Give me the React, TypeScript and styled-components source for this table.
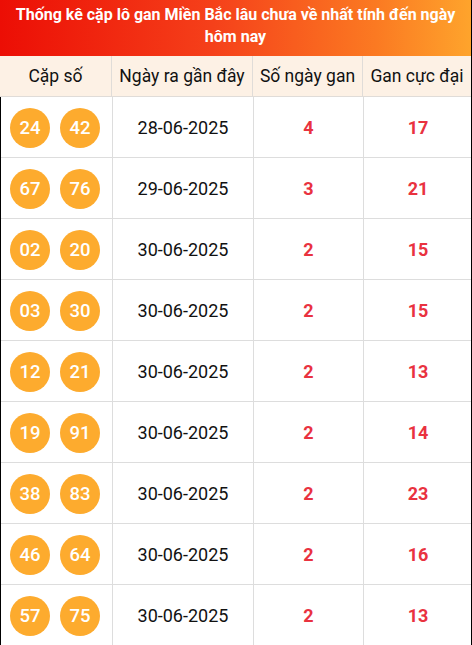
import React from 'react'
import { styled, createGlobalStyle } from 'styled-components';

const GlobalStyle = createGlobalStyle`
	body {
		margin: 0;
		font-family: Roboto, "Liberation Sans", sans-serif;
		background: #fff;
	}
`

interface RowData {
	pair: [string, string];
	date: string;
	days: number;
	max: number;
}

const rows: RowData[] = [
	{ pair: ['24', '42'], date: '28-06-2025', days: 4, max: 17 },
	{ pair: ['67', '76'], date: '29-06-2025', days: 3, max: 21 },
	{ pair: ['02', '20'], date: '30-06-2025', days: 2, max: 15 },
	{ pair: ['03', '30'], date: '30-06-2025', days: 2, max: 15 },
	{ pair: ['12', '21'], date: '30-06-2025', days: 2, max: 13 },
	{ pair: ['19', '91'], date: '30-06-2025', days: 2, max: 14 },
	{ pair: ['38', '83'], date: '30-06-2025', days: 2, max: 23 },
	{ pair: ['46', '64'], date: '30-06-2025', days: 2, max: 16 },
	{ pair: ['57', '75'], date: '30-06-2025', days: 2, max: 13 },
];

const Wrapper = styled.div`
	width: 472px;
	height: 645px;
	overflow: hidden;
	box-sizing: border-box;
	border-right: 1px solid #000;
`
const Title = styled.div`
	height: 56px;
	box-sizing: border-box;
	padding: 4px 8px 0;
	background: linear-gradient(90deg, #ec0e05 0%, #f5401a 45%, #fb7a22 80%, #fea42c 100%);
	color: #fff;
	font-weight: 700;
	font-size: 16px;
	line-height: 22px;
	text-align: center;
`
const Grid = styled.div`
	display: grid;
	grid-template-columns: 112px 141px 110px 108px;
`
const HeadCell = styled.div`
	height: 41px;
	box-sizing: border-box;
	background: #fdf1e5;
	border-right: 1px solid #e0dcd8;
	border-bottom: 1px solid #e0dcd8;
	display: flex;
	align-items: center;
	justify-content: center;
	font-size: 17.5px;
	color: #111;
	white-space: nowrap;
	&:last-child {
		border-right: none;
	}
`
const Body = styled.div`
	border-left: 1px solid #000;
	border-bottom: 1px solid #000;
`
const Cell = styled.div<{ $last?: boolean }>`
	height: 61px;
	box-sizing: border-box;
	border-right: ${({ $last }) => ($last ? 'none' : '1px solid #ddd')};
	border-bottom: 1px solid #ddd;
	display: flex;
	align-items: center;
	justify-content: center;
	padding-top: 1px;
`
const Balls = styled(Cell)`
	justify-content: flex-start;
	gap: 10px;
	padding-left: 9px;
`
const Ball = styled.span`
	width: 40px;
	height: 40px;
	border-radius: 50%;
	background: #fdab2e;
	color: #fff;
	font-size: 18.5px;
	font-weight: 500;
	display: flex;
	align-items: center;
	justify-content: center;
`
const DateText = styled.span`
	font-size: 18px;
	color: #111;
`
const RedNum = styled.span`
	font-size: 18px;
	font-weight: 700;
	color: #e9323f;
`

const App = () => {
	return (
		<>
			<GlobalStyle />
			<Wrapper>
				<Title>Thống kê cặp lô gan Miền Bắc lâu chưa về nhất tính đến ngày hôm nay</Title>
				<Grid>
					<HeadCell>Cặp số</HeadCell>
					<HeadCell>Ngày ra gần đây</HeadCell>
					<HeadCell>Số ngày gan</HeadCell>
					<HeadCell>Gan cực đại</HeadCell>
				</Grid>
				<Body>
					<Grid>
						{rows.map((r, i) => (
							<React.Fragment key={i}>
								<Balls>
									<Ball>{r.pair[0]}</Ball>
									<Ball>{r.pair[1]}</Ball>
								</Balls>
								<Cell><DateText>{r.date}</DateText></Cell>
								<Cell><RedNum>{r.days}</RedNum></Cell>
								<Cell $last><RedNum>{r.max}</RedNum></Cell>
							</React.Fragment>
						))}
					</Grid>
				</Body>
			</Wrapper>
		</>
	);
};

export default App
